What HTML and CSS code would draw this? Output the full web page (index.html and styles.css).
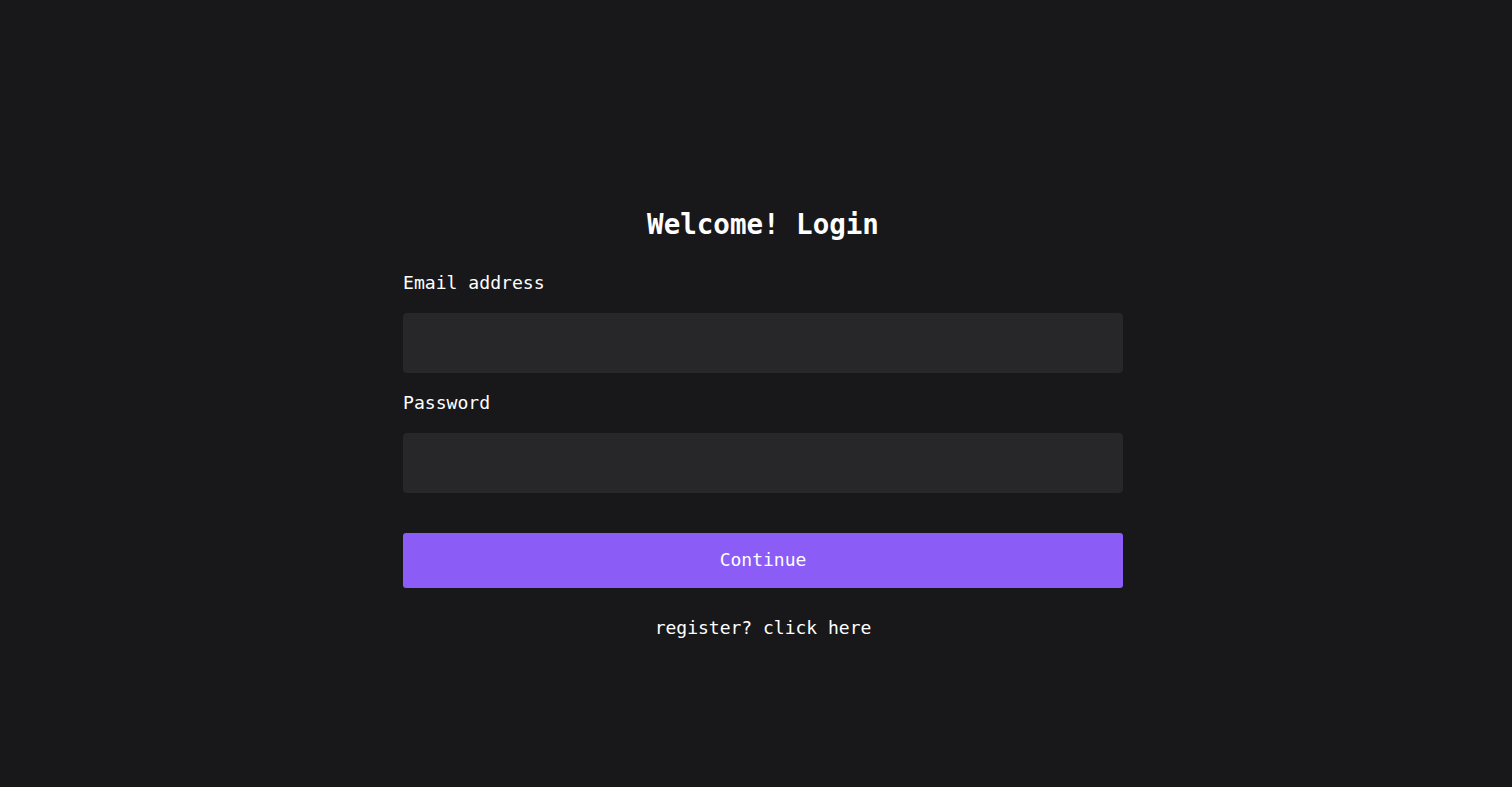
FILE: index.html
```html
<!DOCTYPE html>
<html lang="en">
<head>
<meta charset="utf-8">
<title>Login</title>
<link rel="stylesheet" href="styles.css">
</head>
<body>
<main class="page">
  <form class="login">
    <h1 class="title">Welcome! Login</h1>
    <label class="label" for="email">Email address</label>
    <input class="field" id="email" type="email">
    <label class="label label-gap" for="password">Password</label>
    <input class="field" id="password" type="password">
    <button class="submit" type="button">Continue</button>
    <a class="link" href="#">register? click here</a>
  </form>
</main>
</body>
</html>
```
FILE: styles.css
```css
html, body {
  margin: 0;
  padding: 0;
  background: #18181b;
  height: 100%;
}
body {
  font-family: "DejaVu Sans Mono", "Liberation Mono", monospace;
  color: #ffffff;
}
.page {
  display: flex;
  justify-content: center;
  padding-top: 206px;
  padding-left: 14px;
}
.login {
  width: 720px;
  display: flex;
  flex-direction: column;
}
.title {
  margin: 0 0 28px;
  font-size: 27.5px;
  line-height: 36px;
  font-weight: bold;
  text-align: center;
}
.label {
  font-size: 18.1px;
  line-height: 26px;
  margin-bottom: 17px;
}
.label-gap {
  margin-top: 17px;
}
.field {
  height: 60px;
  box-sizing: border-box;
  border: none;
  border-radius: 4px;
  background: #27272a;
  color: #fff;
  outline: none;
  padding: 0 16px;
  font: inherit;
}
.submit {
  margin-top: 40px;
  height: 55px;
  padding: 0 0 2px;
  border: none;
  border-radius: 3px;
  background: #8b5cf6;
  color: #fff;
  font-family: inherit;
  font-size: 18px;
}
.link {
  margin-top: 27px;
  font-size: 18px;
  line-height: 26px;
  text-align: center;
  color: #fff;
  text-decoration: none;
}
```
